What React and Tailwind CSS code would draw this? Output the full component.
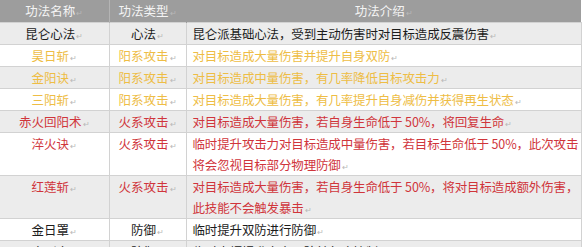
const YELLOW = "text-[#eebd45]";
const RED = "text-[#d0353b]";
const BLACK = "text-[#1c1c1c]";

const rows = [
  { name: "昆仑心法", type: "心法", desc: ["昆仑派基础心法，受到主动伤害时对目标造成反震伤害"], color: BLACK },
  { name: "昊日斩", type: "阳系攻击", desc: ["对目标造成大量伤害并提升自身双防"], color: YELLOW },
  { name: "金阳诀", type: "阳系攻击", desc: ["对目标造成中量伤害，有几率降低目标攻击力"], color: YELLOW },
  { name: "三阳斩", type: "阳系攻击", desc: ["对目标造成大量伤害，有几率提升自身减伤并获得再生状态"], color: YELLOW },
  { name: "赤火回阳术", type: "火系攻击", desc: ["对目标造成大量伤害，若自身生命低于 50%，将回复生命"], color: RED },
  { name: "淬火诀", type: "火系攻击", desc: ["临时提升攻击力对目标造成中量伤害，若目标生命低于 50%，此次攻击", "将会忽视目标部分物理防御"], color: RED },
  { name: "红莲斩", type: "火系攻击", desc: ["对目标造成大量伤害，若自身生命低于 50%，将对目标造成额外伤害，", "此技能不会触发暴击"], color: RED },
  { name: "金日罩", type: "防御", desc: ["临时提升双防进行防御"], color: BLACK },
  { name: "金刚身", type: "防御", desc: ["临时大幅提升自身双防并免疫控制"], color: BLACK },
];

function Mark() {
  return <span className="ml-[1px] text-[8px] leading-none text-[#b8b8b8]">↵</span>;
}

export default function App() {
  return (
    <div
      className="w-[584px] h-[247px] overflow-hidden bg-white"
      style={{ fontFamily: '"Noto Sans CJK SC", "Noto Sans", sans-serif' }}
    >
      <table className="w-[581px] border-collapse table-fixed text-[12.5px] leading-[21px]">
        <colgroup>
          <col className="w-[109px]" />
          <col className="w-[77px]" />
          <col className="w-[395px]" />
        </colgroup>
        <thead>
          <tr className="bg-[#9d9d9d] text-[#f4f4f4] h-[22px]">
            <th className="font-normal text-center border-r border-[#b4b4b4] p-0">功法名称<Mark /></th>
            <th className="font-normal text-center border-r border-[#9d9d9d] p-0">功法类型<Mark /></th>
            <th className="font-normal text-center p-0">功法介绍<Mark /></th>
          </tr>
        </thead>
        <tbody>
          {rows.map((r, i) => (
            <tr key={i} className={(i % 2 === 0 ? "bg-[#ececec]" : "bg-white") + " " + r.color}>
              <td className="align-top text-center border border-l-0 border-[#d2d2d2] p-0">
                <div className="h-[21px] overflow-hidden">{r.name}<Mark /></div>
              </td>
              <td className="align-top text-center border border-[#d2d2d2] p-0">
                <div className="h-[21px] overflow-hidden">{r.type}<Mark /></div>
              </td>
              <td className="align-top border border-[#d2d2d2] py-0 pr-0 pl-[6px] whitespace-nowrap">
                {r.desc.map((line, j) => (
                  <div key={j} className="h-[21px] tracking-[-0.15px]">
                    {line}{j === r.desc.length - 1 && <Mark />}
                  </div>
                ))}
              </td>
            </tr>
          ))}
        </tbody>
      </table>
    </div>
  );
}
